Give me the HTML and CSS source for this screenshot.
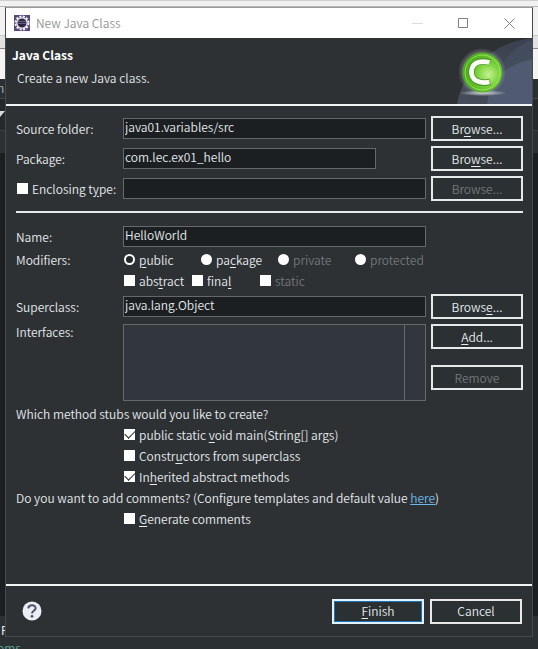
FILE: index.html
```html
<!DOCTYPE html>
<html lang="en">
<head>
<meta charset="utf-8">
<title>New Java Class</title>
<link rel="stylesheet" href="styles.css">
</head>
<body>
<div class="backdrop" aria-hidden="true">
  <span class="behind behind-menu">n</span>
  <span class="behind behind-arrow"></span>
  <span class="behind behind-tab">P</span>
  <span class="behind behind-item">oms</span>
</div>
<main class="dialog">
  <header class="titlebar">
    <svg class="app-icon" viewBox="0 0 16 16" width="16" height="16">
      <rect width="16" height="16" fill="#574a78"/>
      <circle cx="8" cy="8" r="6.5" fill="none" stroke="#f4f1f2" stroke-width="2" stroke-dasharray="2.1 1.3"/>
      <circle cx="8" cy="8" r="5.2" fill="#2b2545" stroke="#eceaf0" stroke-width="1.3"/>
      <path d="M4 6.5h8M3.8 8.5h8.4" stroke="#77728e" stroke-width=".8"/>
    </svg>
    <h1>New Java Class</h1>
    <div class="window-buttons">
      <button type="button" aria-label="Minimize"><svg viewBox="0 0 11 11" width="11" height="11"><path d="M0 5.5h11" stroke="#dcdcdc"/></svg></button>
      <button type="button" aria-label="Maximize"><svg viewBox="0 0 11 11" width="11" height="11"><path d="M.5 .5h9v9h-9z" fill="none" stroke="#808080"/></svg></button>
      <button type="button" aria-label="Close"><svg viewBox="0 0 11 11" width="11" height="11"><path d="M.5 .5l10 10M10.500 .5l-10 10" stroke="#808080"/></svg></button>
    </div>
  </header>
  <section class="banner">
    <div>
      <h2>Java Class</h2>
      <p>Create a new Java class.</p>
    </div>
    <svg class="banner-art" viewBox="0 0 75 66" width="75" height="66">
      <defs>
        <radialGradient id="ball" cx=".65" cy=".55" r=".65"><stop offset="0" stop-color="#c4f291"/><stop offset=".45" stop-color="#78d239"/><stop offset="1" stop-color="#3fa612"/></radialGradient>
        <radialGradient id="halo"><stop offset=".7" stop-color="#b9c4ba" stop-opacity=".55"/><stop offset="1" stop-color="#b9c4ba" stop-opacity="0"/></radialGradient>
        <radialGradient id="shine"><stop offset="0" stop-color="#d3d8d8"/><stop offset="1" stop-color="#d3d8d8" stop-opacity="0"/></radialGradient>
        <linearGradient id="sky" x1="0" y1="1" x2="1" y2="0"><stop offset="0" stop-color="#454d5b"/><stop offset="1" stop-color="#39414e"/></linearGradient>
      </defs>
      <path d="M0 66C7 30 36 5 75 0v66z" fill="url(#sky)"/>
      <path d="M30 66C33 40 50 10 75 2v64z" fill="#424c5d"/>
      <path d="M30 66C33 40 49 27 75 21v45z" fill="#505a70"/>
      <ellipse cx="26" cy="55" rx="24" ry="3" fill="url(#shine)"/>
      <circle cx="25" cy="34" r="24" fill="url(#halo)"/>
      <circle cx="25.500" cy="34.500" r="19.500" fill="url(#ball)" stroke="#56b522"/>
      <circle cx="25.500" cy="34.500" r="17.500" fill="none" stroke="#b6ee80" stroke-opacity=".7"/>
      <path d="M33 24.500C21 21 14.500 26 14.500 34s7 12.500 18.500 10" fill="none" stroke="#4c8e2b" stroke-width="6.500"/>
      <path d="M32.500 24.500C21 21.500 14.500 26 14.500 34s7 12 18 10" fill="none" stroke="#f8fff2" stroke-width="4.800"/>
    </svg>
  </section>
  <form class="form">
    <div class="row">
      <label for="source">Source folder:</label>
      <input class="field" id="source" type="text" value="java01.variables/src">
      <button class="btn" type="button">Br<u>o</u>wse...</button>
    </div>
    <div class="row">
      <label for="package">Package:</label>
      <input class="field field-package" id="package" type="text" value="com.lec.ex01_hello">
      <button class="btn" type="button">Bro<u>w</u>se...</button>
    </div>
    <div class="row">
      <label class="option"><input type="checkbox">Enclosing t<u>y</u>pe:</label>
      <input class="field" type="text" aria-label="Enclosing type">
      <button class="btn" type="button" disabled>Browse...</button>
    </div>
    <hr>
    <div class="row row-name">
      <label for="name">Name:</label>
      <input class="field" id="name" type="text" value="HelloWorld">
    </div>
    <div class="modifiers">
      <span>Modifiers:</span>
      <div class="options access">
        <label class="option"><input type="radio" name="access" checked><span><u>p</u>ublic</span></label>
        <label class="option"><input type="radio" name="access"><span>pa<u>c</u>kage</span></label>
        <label class="option off"><input type="radio" name="access" disabled><span>private</span></label>
        <label class="option off"><input type="radio" name="access" disabled><span>protected</span></label>
      </div>
      <div class="options flags">
        <label class="option"><input type="checkbox"><span>abs<u>t</u>ract</span></label>
        <label class="option"><input type="checkbox"><span>fina<u>l</u></span></label>
        <label class="option off"><input type="checkbox" disabled><span>static</span></label>
      </div>
    </div>
    <div class="row">
      <label for="super">Superclass:</label>
      <input class="field" id="super" type="text" value="java.lang.Object">
      <button class="btn" type="button">Brows<u>e</u>...</button>
    </div>
    <div class="row row-list">
      <span id="interfaces">Interfaces:</span>
      <div class="list" role="listbox" aria-labelledby="interfaces"></div>
      <div class="list-buttons">
        <button class="btn" type="button"><u>A</u>dd...</button>
        <button class="btn" type="button" disabled>Remove</button>
      </div>
    </div>
    <p class="question">Which method stubs would you like to create?</p>
    <div class="stubs">
      <label class="option"><input type="checkbox" checked><span>public static <u>v</u>oid main(String[] args)</span></label>
      <label class="option"><input type="checkbox"><span>Constr<u>u</u>ctors from superclass</span></label>
      <label class="option"><input type="checkbox" checked><span>In<u>h</u>erited abstract methods</span></label>
    </div>
    <p class="question">Do you want to add comments? (Configure templates and default value <a href="#">here</a>)</p>
    <div class="stubs">
      <label class="option"><input type="checkbox"><span><u>G</u>enerate comments</span></label>
    </div>
  </form>
  <footer class="footer">
    <button class="help" type="button" aria-label="Help">
      <svg viewBox="0 0 20 20" width="20" height="20"><circle cx="10" cy="10" r="9.500" fill="#eceef6"/><path d="M6.300 7.400C6.500 3.300 13.700 3.400 13.600 7.200c0 2.500-3.600 2.700-3.600 5.300" fill="none" stroke="#4d5368" stroke-width="2"/><circle cx="10" cy="15.300" r="1.400" fill="#4d5368"/></svg>
    </button>
    <button class="btn btn-default" type="button"><u>F</u>inish</button>
    <button class="btn btn-cancel" type="button">Cancel</button>
  </footer>
</main>
</body>
</html>
```
FILE: styles.css
```css
* {
  box-sizing: border-box;
}

body {
  margin: 0;
  min-height: 100vh;
  padding: 7px 5px 12px;
  display: flex;
  flex-direction: column;
  position: relative;
  overflow: hidden;
  background: #1b1f22;
  color: #e6eaec;
  font: 350 12px/16px "Noto Sans CJK KR", "Noto Sans", sans-serif;
}

h1,
h2,
p {
  margin: 0;
  font-size: 12px;
  font-weight: inherit;
}

button,
input {
  font: inherit;
  color: inherit;
}

u {
  text-underline-offset: 2px;
}

.backdrop {
  position: absolute;
  inset: 0;
  overflow: hidden;
  background:
    linear-gradient(#2b3033, #2b3033) 0 100% / 100% 33px no-repeat,
    linear-gradient(#d0d0d0 0 1px, #f1f1f1 1px 6px, #b5b5b5 6px 7px, #f2f2f2 7px 35px, #c8c8c8 35px 36px, #e2e2e2 36px 48px, #8a8a8a 48px 49px, #f4f4f4 49px 79px, #2b3033 79px 98px, #42474a 98px 99px, #25292c 99px 130px, #3a3f42 130px 131px, #2b3033 131px 153px, #1b1f22 153px);
}

.behind {
  position: absolute;
  left: 0;
  color: #a9aeb1;
}

.behind-menu {
  top: 80px;
  left: -3px;
}

.behind-arrow {
  top: 111px;
  border-top: 6px solid #d8d8d8;
  border-right: 5px solid transparent;
}

.behind-tab {
  top: 622px;
  left: 1px;
  color: #ffffff;
}

.behind-item {
  top: 640px;
  left: -3px;
  color: #62a89c;
}

.dialog {
  position: relative;
  flex: 1;
  display: flex;
  flex-direction: column;
  border: 1px solid #45494c;
  border-top-color: #9a9a9a;
  background: #2d3134;
}

.titlebar {
  display: flex;
  align-items: center;
  height: 30px;
  padding-left: 8px;
  background: #ffffff;
  color: #929292;
}

.titlebar h1 {
  margin-left: 6px;
}

.window-buttons {
  display: flex;
  margin-left: auto;
}

.window-buttons button {
  display: grid;
  place-items: center;
  width: 46px;
  height: 28px;
  padding: 0;
  border: 0;
  background: none;
}

.banner {
  display: flex;
  justify-content: space-between;
  height: 68px;
  padding-left: 6px;
  border-bottom: 2px solid #f0f4f5;
}

.banner h2 {
  margin-top: 9px;
  font-weight: 700;
  color: #ffffff;
}

.banner p {
  margin: 7px 0 0 5px;
}

.banner-art {
  flex: none;
}

.form {
  flex: 1;
  padding: 10px 9px 0 10px;
}

.row {
  display: grid;
  grid-template-columns: 102px 1fr 92px;
  column-gap: 5px;
  align-items: center;
  margin-bottom: 5px;
}

.field {
  width: 100%;
  height: 21px;
  padding: 0 1px 4px;
  border: 1px solid #65696b;
  border-radius: 0;
  outline: 0;
  background: #1b1f22;
}

.field-package {
  width: calc(100% - 50px);
}

.btn {
  width: 92px;
  height: 25px;
  padding: 0;
  border: 2px solid #e4e9ea;
  background: #2b3033;
  text-align: center;
}

.btn:disabled {
  color: #73787a;
}

.option {
  display: flex;
  align-items: center;
  height: 21px;
  white-space: pre;
}

.option input {
  appearance: none;
  flex: none;
  width: 11px;
  height: 11px;
  margin: 0 4px 0 1px;
  background: #ffffff;
}

.option input[type="radio"] {
  border-radius: 50%;
}

.option input[type="radio"]:checked {
  border: 2px solid #ffffff;
  background: #24292b;
}

.option input[type="checkbox"]:checked {
  display: grid;
  place-items: center;
}

.option input[type="checkbox"]:checked::before {
  content: "";
  width: 9px;
  height: 5px;
  margin-bottom: 3px;
  border: solid #24292b;
  border-width: 0 0 1px 1px;
  transform: rotate(-45deg);
}

.off {
  color: #73787a;
}

hr {
  height: 2px;
  margin: 10px 0 13px;
  border: 0;
  background: #e4e9ea;
}

.row-name {
  margin-bottom: 2px;
}

.modifiers {
  display: grid;
  grid-template-columns: 107px 1fr;
  align-items: center;
  margin-bottom: 3px;
}

.options {
  display: grid;
  grid-column: 2;
}

.access {
  grid-template-columns: repeat(4, 77px);
}

.flags {
  grid-template-columns: repeat(4, 68px);
}

.row-list {
  align-items: start;
  margin-bottom: 2px;
}

.list {
  height: 77px;
  border: 1px solid #65696b;
  background: linear-gradient(#65696b, #65696b) right 20px top / 1px 100% no-repeat #32373d;
}

.list-buttons {
  display: grid;
  row-gap: 16px;
}

.question {
  height: 21px;
  line-height: 21px;
}

.question a {
  color: #6fb9e8;
}

.stubs {
  padding-left: 107px;
}

.footer {
  display: flex;
  align-items: center;
  gap: 6px;
  height: 52px;
  padding: 0 10px 0 16px;
  border-top: 2px solid #f0f4f5;
}

.help {
  display: flex;
  margin-right: auto;
  padding: 0;
  border: 0;
  background: none;
}

.btn-default {
  border-color: #e2f2ff;
  box-shadow: inset 0 0 0 1px #1875b8;
}

.btn-cancel {
  border-color: #e8e8e8;
}
```
